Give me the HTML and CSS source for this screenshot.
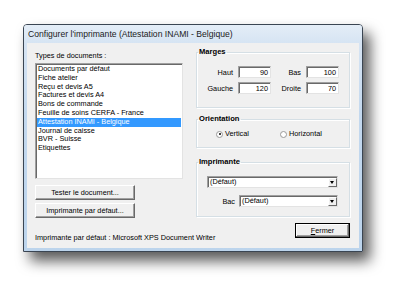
FILE: index.html
```html
<!DOCTYPE html>
<html lang="fr">
<head>
<meta charset="utf-8">
<title>Configurer l'imprimante</title>
<link rel="stylesheet" href="styles.css">
</head>
<body>
<div class="stage">
  <div class="window">
    <div class="titlebar">Configurer l'imprimante (Attestation INAMI - Belgique)</div>
    <div class="client">
      <div class="left">
        <div class="lbl">Types de documents :</div>
        <ul class="listbox">
          <li>Documents par défaut</li>
          <li>Fiche atelier</li>
          <li>Reçu et devis A5</li>
          <li>Factures et devis A4</li>
          <li>Bons de commande</li>
          <li>Feuille de soins CERFA - France</li>
          <li class="sel">Attestation INAMI - Belgique</li>
          <li>Journal de caisse</li>
          <li>BVR - Suisse</li>
          <li>Etiquettes</li>
        </ul>
        <button class="btn wide">Tester le document...</button>
        <button class="btn wide second">Imprimante par défaut...</button>
        <div class="footer">Imprimante par défaut : Microsoft XPS Document Writer</div>
      </div>
      <div class="right">
        <fieldset class="group marges">
          <legend>Marges</legend>
          <div class="mgrid">
            <span class="flabel">Haut</span><span class="field">90</span>
            <span class="flabel">Bas</span><span class="field">100</span>
            <span class="flabel">Gauche</span><span class="field">120</span>
            <span class="flabel">Droite</span><span class="field">70</span>
          </div>
        </fieldset>
        <fieldset class="group orient">
          <legend>Orientation</legend>
          <div class="radios">
            <span class="radio"><span class="dot on"></span>Vertical</span>
            <span class="radio"><span class="dot"></span>Horizontal</span>
          </div>
        </fieldset>
        <fieldset class="group printer">
          <legend>Imprimante</legend>
          <div class="pbody">
            <div class="combo full"><span class="ctext">(Défaut)</span><span class="arrow"></span></div>
            <div class="bacrow">
              <span class="flabel">Bac</span>
              <div class="combo bac"><span class="ctext">(Défaut)</span><span class="arrow"></span></div>
            </div>
          </div>
        </fieldset>
        <button class="btn fermer"><u>F</u>ermer</button>
      </div>
    </div>
  </div>
</div>
</body>
</html>
```

FILE: styles.css
```css
html, body {
  margin: 0;
  padding: 0;
  background: #ffffff;
}
body {
  width: 406px;
  height: 296px;
  overflow: hidden;
  font-family: "Liberation Sans", Arial, sans-serif;
  font-size: 7.3px;
  color: #000;
}
.stage {
  padding: 24px 0 0 23px;
}
.window {
  width: 340px;
  height: 228px;
  box-sizing: border-box;
  border: 1px solid #3a4552;
  border-radius: 4px 4px 0 0;
  background: linear-gradient(#dbe7f4, #c3d8ee 40%, #bcd4ec);
  box-shadow: 7px 9px 14px rgba(0, 0, 0, 0.65);
  display: flex;
  flex-direction: column;
}
.titlebar {
  height: 18px;
  line-height: 18px;
  padding-left: 4px;
  font-size: 8.6px;
  color: #1b1b1b;
  background: linear-gradient(#e4edf7, #d6e4f3);
  border-radius: 3px 3px 0 0;
}
.client {
  flex: 1;
  margin: 0 3px 3px 3px;
  background: #f0f0f0;
  display: flex;
  gap: 13px;
  padding: 4px 9px 0 8px;
}
.left {
  width: 148px;
  padding-top: 4px;
  display: flex;
  flex-direction: column;
  align-items: flex-start;
}
.lbl {
  line-height: 9px;
  margin-bottom: 3px;
}
.listbox {
  list-style: none;
  margin: 0;
  padding: 1px;
  width: 148px;
  height: 116px;
  box-sizing: border-box;
  background: #fff;
  border-top: 1px solid #a0a0a0;
  border-left: 1px solid #a0a0a0;
  border-right: 1px solid #e3e3e3;
  border-bottom: 1px solid #e3e3e3;
  box-shadow: inset 1px 1px 0 #696969;
}
.listbox li {
  height: 8.8px;
  line-height: 8.8px;
  padding-left: 1px;
  white-space: nowrap;
}
.listbox li.sel {
  background: #3399ff;
  color: #fff;
}
.btn {
  font-family: inherit;
  font-size: 7.3px;
  color: #000;
  margin: 0;
  padding: 0;
  height: 15px;
  box-sizing: border-box;
  background: #f0f0f0;
  border-top: 1px solid #ffffff;
  border-left: 1px solid #ffffff;
  border-right: 1px solid #696969;
  border-bottom: 1px solid #696969;
  box-shadow: inset -1px -1px 0 #a0a0a0;
}
.btn.wide {
  width: 100px;
  margin-top: 6px;
}
.btn.wide.second {
  margin-top: 3px;
}
.footer {
  margin-top: 15px;
  line-height: 9px;
  white-space: nowrap;
}
.right {
  width: 154px;
  display: flex;
  flex-direction: column;
}
.group {
  margin: 0;
  padding: 0;
  min-width: 0;
  border: 1px solid #d5dfe5;
  box-shadow: inset 1px 1px 0 #fff, 1px 1px 0 #fff;
}
.group legend {
  font-weight: bold;
  font-size: 7.6px;
  line-height: 10px;
  padding: 0 1px;
  margin-left: 1px;
}
.mgrid {
  padding: 9px 11px 13px 5px;
  display: grid;
  grid-template-columns: 31px 33px 25px 33px;
  grid-auto-rows: 12px;
  column-gap: 5px;
  row-gap: 4px;
  align-items: center;
}
.flabel {
  text-align: right;
  white-space: nowrap;
}
.field {
  height: 12px;
  line-height: 11px;
  box-sizing: border-box;
  background: #fff;
  text-align: right;
  padding-right: 2px;
  border-top: 1px solid #a0a0a0;
  border-left: 1px solid #a0a0a0;
  border-right: 1px solid #e3e3e3;
  border-bottom: 1px solid #e3e3e3;
  box-shadow: inset 1px 1px 0 #696969;
}
.orient {
  margin-top: 6px;
}
.radios {
  padding: 5px 0 8px 19px;
  display: grid;
  grid-template-columns: 64px auto;
  line-height: 10px;
}
.radio {
  display: flex;
  align-items: center;
  gap: 2px;
}
.dot {
  width: 7px;
  height: 7px;
  box-sizing: border-box;
  border-radius: 50%;
  background: #fff;
  border: 1px solid #9a9a9a;
  position: relative;
}
.dot.on::after {
  content: "";
  position: absolute;
  left: 1.5px;
  top: 1.5px;
  width: 2px;
  height: 2px;
  border-radius: 50%;
  background: #000;
}
.printer {
  margin-top: 9px;
}
.pbody {
  padding: 9px 11px 9px 10px;
}
.combo {
  height: 12px;
  box-sizing: border-box;
  background: #fff;
  border-top: 1px solid #a0a0a0;
  border-left: 1px solid #a0a0a0;
  border-right: 1px solid #e3e3e3;
  border-bottom: 1px solid #e3e3e3;
  box-shadow: inset 1px 1px 0 #696969;
  display: flex;
  align-items: center;
}
.ctext {
  flex: 1;
  padding-left: 2px;
  line-height: 10px;
}
.arrow {
  width: 9px;
  height: 9px;
  margin-right: 0.5px;
  box-sizing: border-box;
  background: #f0f0f0;
  border-top: 1px solid #fff;
  border-left: 1px solid #fff;
  border-right: 1px solid #696969;
  border-bottom: 1px solid #696969;
  display: flex;
  align-items: center;
  justify-content: center;
}
.arrow::after {
  content: "";
  border-left: 2.5px solid transparent;
  border-right: 2.5px solid transparent;
  border-top: 3px solid #000;
}
.bacrow {
  margin-top: 7px;
  display: flex;
  align-items: center;
  justify-content: flex-end;
  gap: 4px;
}
.combo.bac {
  width: 99px;
}
.fermer {
  margin-top: 6px;
  align-self: flex-end;
  width: 55px;
  border: 1px solid #000;
  box-shadow: inset -1px -1px 0 #696969, inset 1px 1px 0 #fff, inset -2px -2px 0 #a0a0a0;
}
.fermer u {
  text-decoration: underline;
}
```
